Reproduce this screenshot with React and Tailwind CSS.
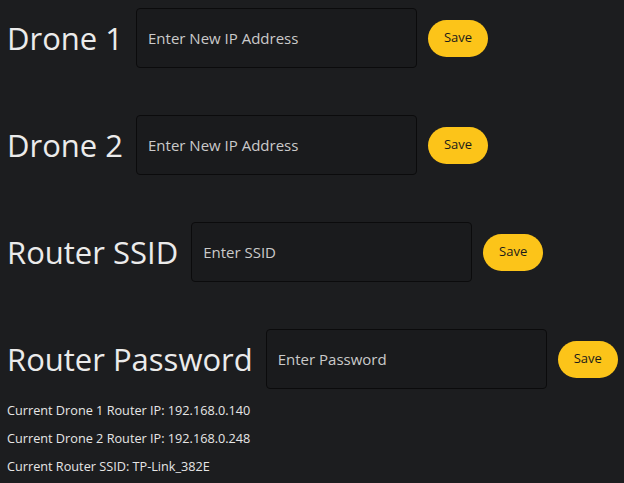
export default function App() {
  const rows = [
    { label: "Drone 1", ph: "Enter New IP Address" },
    { label: "Drone 2", ph: "Enter New IP Address" },
    { label: "Router SSID", ph: "Enter SSID" },
    { label: "Router Password", ph: "Enter Password" },
  ];
  return (
    <div className="w-[624px] h-[483px] bg-[#1c1d1f] overflow-hidden pt-[8px]" style={{ fontFamily: '"Open Sans", "Noto Sans", sans-serif' }}>
      <div className="flex flex-col gap-[47px]">
        {rows.map((r) => (
          <div key={r.label} className="flex items-center h-[60px] pl-[7px]">
            <span className="text-[31px] text-[#ebebeb] leading-none whitespace-nowrap">{r.label}</span>
            <input
              placeholder={r.ph}
              className="ml-[13px] w-[281px] h-[60px] bg-[#1a1b1d] border border-[#0b0b0c] rounded-[4px] px-[11px] text-[15px] text-[#d0d0d0] placeholder:text-[#cacaca] outline-none"
            />
            <button className="ml-[11px] w-[60px] h-[37px] rounded-full bg-[#fcc419] text-[#1a1a1a] text-[13px] font-medium">
              Save
            </button>
          </div>
        ))}
      </div>
      <div className="pl-[7px] pt-[12px] flex flex-col gap-[10px] text-[12.7px] text-[#e6e6e6] leading-[18px]">
        <div>Current Drone 1 Router IP: 192.168.0.140</div>
        <div>Current Drone 2 Router IP: 192.168.0.248</div>
        <div>Current Router SSID: TP-Link_382E</div>
      </div>
    </div>
  );
}
